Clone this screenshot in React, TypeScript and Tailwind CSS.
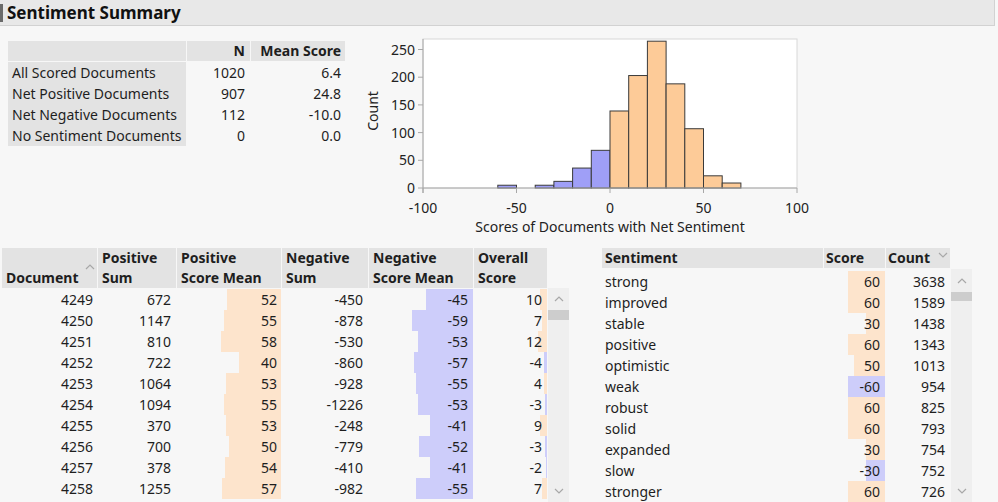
import React from "react";

const summaryRows = [
  ["All Scored Documents", "1020", "6.4"],
  ["Net Positive Documents", "907", "24.8"],
  ["Net Negative Documents", "112", "-10.0"],
  ["No Sentiment Documents", "0", "0.0"],
];

const docRows = [
  [4249, 672, 52, -450, -45, 10],
  [4250, 1147, 55, -878, -59, 7],
  [4251, 810, 58, -530, -53, 12],
  [4252, 722, 40, -860, -57, -4],
  [4253, 1064, 53, -928, -55, 4],
  [4254, 1094, 55, -1226, -53, -3],
  [4255, 370, 53, -248, -41, 9],
  [4256, 700, 50, -779, -52, -3],
  [4257, 378, 54, -410, -41, -2],
  [4258, 1255, 57, -982, -55, 7],
];

const termRows: [string, number, number][] = [
  ["strong", 60, 3638],
  ["improved", 60, 1589],
  ["stable", 30, 1438],
  ["positive", 60, 1343],
  ["optimistic", 50, 1013],
  ["weak", -60, 954],
  ["robust", 60, 825],
  ["solid", 60, 793],
  ["expanded", 30, 754],
  ["slow", -30, 752],
  ["stronger", 60, 726],
];

const bins = [
  [-60, 5], [-40, 5], [-30, 12], [-20, 36], [-10, 68],
  [0, 139], [10, 203], [20, 265], [30, 188], [40, 107], [50, 22], [60, 9],
];

const ORANGE = "#fde4cc";
const BLUE = "#cdcdfa";

// bar drawn from the right edge of a cell, width as a share of the cell
function barStyle(v: number, cellW: number) {
  const w = (Math.abs(v) / 100) * cellW;
  const c = v >= 0 ? ORANGE : BLUE;
  return { background: `linear-gradient(to left, ${c} ${w}px, transparent ${w}px)` };
}

function Chevron({ up }: { up?: boolean }) {
  return (
    <svg width="10" height="6" viewBox="0 0 10 6">
      <polyline
        points={up ? "1,5 5,1 9,5" : "1,1 5,5 9,1"}
        fill="none"
        stroke="#a8a8a8"
        strokeWidth="1.2"
      />
    </svg>
  );
}

function Scrollbar({ topH, thumbH, height }: { topH: number; thumbH: number; height: number }) {
  return (
    <div className="flex flex-col w-[21px] bg-[#efefef]" style={{ height }}>
      <div className="flex items-center justify-center" style={{ height: topH }}>
        <Chevron up />
      </div>
      <div className="bg-[#cdcdcd]" style={{ height: thumbH }} />
      <div className="flex-1" />
      <div className="flex items-center justify-center h-[22px]">
        <Chevron />
      </div>
    </div>
  );
}

function Histogram() {
  const X = (v: number) => 63 + (v + 100) * 1.87;
  const Y = (c: number) => 158 - c * 0.554;
  return (
    <svg width="450" height="210" className="ml-[15px] mt-[4px] shrink-0" fontFamily="'Noto Sans', sans-serif" fontSize="14">
      <rect x="63" y="9" width="374" height="149" fill="#ffffff" stroke="#d8d8d8" />
      {bins.map(([v, c]) => (
        <rect
          key={v}
          x={X(v)}
          y={Y(c)}
          width={18.7}
          height={158 - Y(c)}
          fill={v < 0 ? "#9f9ff7" : "#fdcb98"}
          stroke="#3a3a3a"
          strokeWidth="1"
        />
      ))}
      <line x1="63" y1="158" x2="437" y2="158" stroke="#a8a8a8" />
      <line x1="63" y1="9" x2="63" y2="163" stroke="#a8a8a8" />
      {[0, 50, 100, 150, 200, 250].map((t) => (
        <g key={t}>
          <line x1="58" y1={Y(t)} x2="63" y2={Y(t)} stroke="#a8a8a8" />
          <text x="55" y={Y(t) + 5} textAnchor="end" fill="#222">{t}</text>
        </g>
      ))}
      {[-100, -50, 0, 50, 100].map((t) => (
        <g key={t}>
          <line x1={X(t)} y1="158" x2={X(t)} y2="163" stroke="#a8a8a8" />
          <text x={X(t)} y="183" textAnchor="middle" fill="#222">{t}</text>
        </g>
      ))}
      <text x="250" y="202" textAnchor="middle" fill="#222">Scores of Documents with Net Sentiment</text>
      <g transform="translate(18 81) rotate(-90)">
        <text x="0" y="0" textAnchor="middle" fill="#222">Count</text>
      </g>
    </svg>
  );
}

const docCols = [
  { w: 95, label: ["", "Document"] },
  { w: 78, label: ["Positive", "Sum"] },
  { w: 104, label: ["Positive", "Score Mean"] },
  { w: 86, label: ["Negative", "Sum"] },
  { w: 104, label: ["Negative", "Score Mean"] },
  { w: 73, label: ["Overall", "Score"] },
];

export default function App() {
  return (
    <div className="w-[998px] h-[502px] overflow-hidden bg-[#f7f7f7] text-[#1e1e1e] text-[14px] font-['Noto_Sans',sans-serif]">
      {/* outline header */}
      <div className="flex items-center h-[26px] mr-[3px] bg-[#e8e8e8] border-b border-r border-[#d2d2d2]">
        <div className="w-[3px] h-[18px] bg-[#6a6a6a]" />
        <div className="ml-[4px] text-[17px] font-bold leading-none text-[#111]">Sentiment Summary</div>
      </div>

      <div className="flex h-[222px]">
        {/* summary table */}
        <div className="ml-[8px] mt-[15px] shrink-0">
          <div className="flex gap-px h-[20px] leading-[20px] font-bold">
            <div className="w-[178px] bg-[#e3e3e3]" />
            <div className="w-[63px] bg-[#e3e3e3] text-right pr-[5px]">N</div>
            <div className="w-[94px] bg-[#e3e3e3] text-right pr-[4px]">Mean Score</div>
          </div>
          <div className="mt-px">
            {summaryRows.map((r) => (
              <div key={r[0]} className="flex gap-px h-[21px] leading-[21px]">
                <div className="w-[178px] bg-[#e3e3e3] pl-[4px] whitespace-nowrap">{r[0]}</div>
                <div className="w-[63px] text-right pr-[5px]">{r[1]}</div>
                <div className="w-[94px] text-right pr-[4px]">{r[2]}</div>
              </div>
            ))}
          </div>
        </div>
        <Histogram />
      </div>

      <div className="flex items-start">
        {/* document scores table */}
        <div className="ml-[2px] shrink-0">
          <div className="flex gap-px h-[40px] font-bold leading-[20px]">
            {docCols.map((c, i) => (
              <div key={i} className="relative bg-[#e3e3e3] pl-[4px] whitespace-nowrap" style={{ width: c.w }}>
                <div className="h-[20px]">{c.label[0]}</div>
                <div className="h-[20px]">{c.label[1]}</div>
                {i === 0 && (
                  <span className="absolute right-[2px] top-[16px]">
                    <Chevron up />
                  </span>
                )}
              </div>
            ))}
          </div>
          <div className="flex">
            <div className="mt-px">
              {docRows.map((r) => (
                <div key={r[0]} className="flex gap-px h-[21px] leading-[21px]">
                  <div className="w-[95px] text-right pr-[4px]">{r[0]}</div>
                  <div className="w-[78px] text-right pr-[5px]">{r[1]}</div>
                  <div className="w-[104px] text-right pr-[4px]" style={barStyle(r[2], 104)}>{r[2]}</div>
                  <div className="w-[86px] text-right pr-[5px]">{r[3]}</div>
                  <div className="w-[104px] text-right pr-[5px]" style={barStyle(r[4], 104)}>{r[4]}</div>
                  <div className="w-[73px] text-right pr-[5px]" style={barStyle(r[5], 73)}>{r[5]}</div>
                </div>
              ))}
            </div>
            <div className="ml-px">
              <Scrollbar topH={22} thumbH={10} height={214} />
            </div>
          </div>
        </div>

        {/* sentiment terms table */}
        <div className="ml-[33px] shrink-0">
          <div className="flex gap-px h-[20px] leading-[20px] font-bold w-[350px]">
            <div className="w-[221px] bg-[#e3e3e3] pl-[3px]">Sentiment</div>
            <div className="w-[61px] bg-[#e3e3e3] pl-[2px]">Score</div>
            <div className="relative w-[64px] bg-[#e3e3e3] pl-[2px]">
              Count
              <span className="absolute right-[2px] top-[4px]">
                <Chevron />
              </span>
            </div>
          </div>
          <div className="flex mt-px">
            <div className="mt-[2px]">
              {termRows.map((r) => (
                <div key={r[0]} className="flex gap-px h-[21px] leading-[21px]">
                  <div className="w-[221px] pl-[3px]">{r[0]}</div>
                  <div className="w-[61px] text-right pr-[5px]" style={barStyle(r[1], 62)}>{r[1]}</div>
                  <div className="w-[64px] text-right pr-[5px]">{r[2]}</div>
                </div>
              ))}
            </div>
            <div className="ml-px">
              <Scrollbar topH={23} thumbH={9} height={233} />
            </div>
          </div>
        </div>
      </div>
    </div>
  );
}
